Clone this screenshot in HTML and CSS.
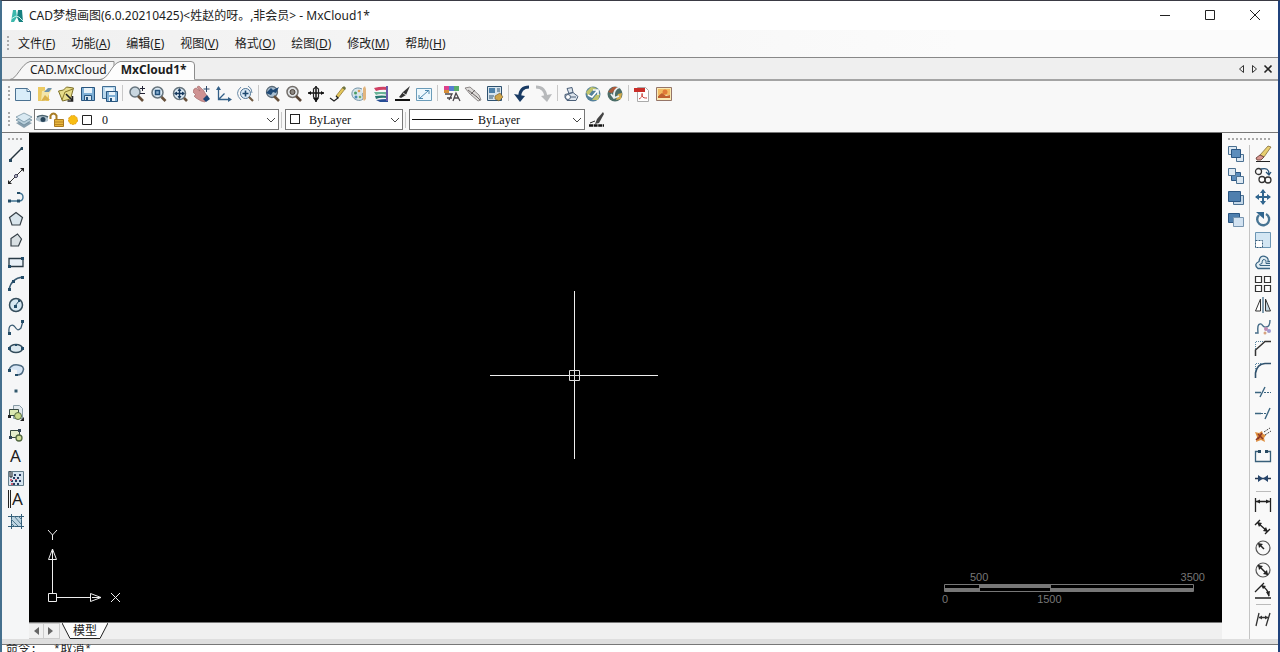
FILE: index.html
```html
<!DOCTYPE html>
<html lang="zh-CN">
<head>
<meta charset="utf-8">
<title>CAD梦想画图</title>
<link rel="stylesheet" href="styles.css">
</head>
<body>
<div class="window">
<header class="titlebar">
<svg class="logo" viewBox="0 0 14 14"><path d="M3 1h3l1 7-3 5H1z" fill="#3cb8ac"/><path d="M8 1h4l1 12H9L7 8z" fill="#15807f"/><path d="M1 10l5-3 3 1 4 4" stroke="#c8f2ea" fill="none"/></svg>
<h1 class="title">CAD梦想画图(6.0.20210425)&lt;姓赵的呀。,非会员&gt; - MxCloud1*</h1>
<div class="winbtns">
<button aria-label="最小化"><svg viewBox="0 0 12 12"><path d="M1 5.500h10" stroke="#222"/></svg></button>
<button aria-label="最大化"><svg viewBox="0 0 12 12"><path d="M1.500 .5h9v9h-9z" stroke="#222" fill="none"/></svg></button>
<button aria-label="关闭"><svg viewBox="0 0 12 12"><path d="M1 0l10 10M11 0L1 10" stroke="#222"/></svg></button>
</div>
</header>
<nav class="menubar"><span class="grip"></span>
<button>文件(<u>F</u>)</button><button>功能(<u>A</u>)</button><button>编辑(<u>E</u>)</button><button>视图(<u>V</u>)</button><button>格式(<u>O</u>)</button><button>绘图(<u>D</u>)</button><button>修改(<u>M</u>)</button><button>帮助(<u>H</u>)</button>
</nav>
<div class="doctabs">
<svg class="taboutline" viewBox="0 0 200 23"><path d="M8 21.500C15 21 19 6 28 3.500H112V21.500z" fill="#f7f7f7" stroke="#8c8c8c"/><path d="M98 22C107 21 109 6 118 3.500H189Q192.500 3.500 192.500 7V22z" fill="#fdfdfd"/><path d="M98 21.500C107 21 109 6 118 3.500H189Q192.500 3.500 192.500 7V21.500" fill="none" stroke="#8c8c8c"/></svg>
<button class="tab">CAD.MxCloud</button><button class="tab active">MxCloud1*</button>
<div class="tabctl">
<button aria-label="上一个"><svg viewBox="0 0 10 10"><path d="M6.500 1.500v7L2.500 5z" fill="none" stroke="#333"/></svg></button>
<button aria-label="下一个"><svg viewBox="0 0 10 10"><path d="M2.500 1.500v7L6.500 5z" fill="none" stroke="#333"/></svg></button>
<button aria-label="关闭文档"><svg viewBox="0 0 10 10"><path d="M1.500 1.500l7 7M8.500 1.500l-7 7" stroke="#222" stroke-width="1.600"/></svg></button>
</div>
</div>
<div class="bars">
<div class="row"><span class="grip"></span>
<div class="tools">
<button aria-label="新建"><svg viewBox="0 0 18 18"><path d="M1.500 3.500h12l3 3v9h-15z" fill="#d9edf9" stroke="#4b7292"/><path d="M13 3.500v3h3.500" fill="#fff" stroke="#4b7292"/></svg></button>
<button aria-label="打开"><svg viewBox="0 0 18 18"><path d="M2 2h7v3h4v11H2z" fill="#ecca62"/><path d="M6 6l10-2-4 7-2 5H5z" fill="#f3e6aa"/><path d="M8 7l4-4h4l-3 4z" fill="#6e93ad"/><path d="M5 16l4-6 5 5" fill="#d9b04a"/></svg></button>
<button aria-label="打开云图"><svg viewBox="0 0 18 18"><path d="M1.500 6l5-1 3-3 7 1-3 11-8 2z" fill="#e7dc8a" stroke="#7d7028"/><path d="M5 15l3-8 8-3" stroke="#8a7a2c" fill="none"/><path d="M9 9l6 6M15.500 11v5h-5" stroke="#222" stroke-width="1.600" fill="none"/></svg></button>
<button aria-label="保存"><svg viewBox="0 0 18 18"><path d="M2.500 2.500h13v13h-13z" fill="#7fb0d6" stroke="#28557e"/><path d="M5 3h8v5H5z" fill="#e8f3fa"/><path d="M5.500 10.500h7v5h-7z" fill="#d8e6ef" stroke="#28557e"/><path d="M7 12h2v3H7z" fill="#28557e"/></svg></button>
<button aria-label="另存为"><svg viewBox="0 0 18 18"><path d="M1.500 1.500h13v12h-13z" fill="#b9d7ec" stroke="#3f6d93"/><path d="M4 3h8v3H4z" fill="#eef7fc"/><path d="M5.500 6.500h11v10h-11z" fill="#7fb0d6" stroke="#28557e"/><path d="M8 7h6v3H8zM8 12h6v4H8z" fill="#e8f3fa"/><path d="M9 13h2v3H9z" fill="#28557e"/></svg></button>
<i class="sep"></i>
<button aria-label="实时缩放"><svg viewBox="0 0 18 18"><circle cx="7" cy="7" r="5" fill="#c8d6df" stroke="#66747d" stroke-width="1.500"/><path d="M10 11l5 5" stroke="#66503b" stroke-width="2.600"/><path d="M12 3.500h5M14.500 1v5M12 8.500h5" stroke="#223"/></svg></button>
<button aria-label="窗口缩放"><svg viewBox="0 0 18 18"><circle cx="7.500" cy="7.500" r="5.500" fill="#dceaf5" stroke="#66747d" stroke-width="1.500"/><path d="M5.500 5.500h4v4h-4z" fill="#8cb2d4" stroke="#22507a" stroke-width="1.500"/><path d="M11.500 12l4 4" stroke="#66503b" stroke-width="2.600"/></svg></button>
<button aria-label="全部缩放"><svg viewBox="0 0 18 18"><circle cx="8.500" cy="8.500" r="6" fill="#dceaf5" stroke="#66747d" stroke-width="1.500"/><path d="M13 13l3 3" stroke="#66503b" stroke-width="2.600"/><path d="M8.500 4v9M4 8.500h9" stroke="#173a5f" stroke-width="1.400"/><path d="M6.500 6l2-3 2 3zM6.500 11l2 3 2-3zM6 6.500l-3 2 3 2zM11 6.500l3 2-3 2z" fill="#173a5f"/></svg></button>
<button aria-label="平移"><svg viewBox="0 0 18 18"><path d="M1 4l2-1 4 3-3-4 2-1 5 5 1 2 3 4-3 5-4-1-5-3-2-2 2-1-3-3z" fill="#cf9292" stroke="#9d6060" stroke-width=".6"/><path d="M10 14l4-4 3 4-4 3z" fill="#1c4576"/><path d="M13.500 1v6M10.500 4h6" stroke="#2a4668"/></svg></button>
<button aria-label="坐标系"><svg viewBox="0 0 18 18"><path d="M3.500 2v12.500H15M3.500 14.500l6-6" fill="none" stroke="#335f87" stroke-width="1.300"/><path d="M1 5l2.500-4L6 5zM13 12l4 2.500-4 2.500z" fill="#335f87"/></svg></button>
<button aria-label="缩放上一个"><svg viewBox="0 0 18 18"><circle cx="9.500" cy="8.500" r="5" fill="#dcebf7" stroke="#4d7292"/><path d="M9.500 5.500v6M6.500 8.500h6" stroke="#1d4970" stroke-width="1.600"/><path d="M13 12l4 4" stroke="#715b42" stroke-width="2.200"/><path d="M5 2Q-2 8 5 15M12 1q4 2 4 7" fill="none" stroke="#6b8ca8"/></svg></button>
<i class="sep"></i>
<button aria-label="查看"><svg viewBox="0 0 18 18"><circle cx="8" cy="7" r="5.500" fill="#a9bfd1" stroke="#5b6a76" stroke-width="1.300"/><path d="M2 8l5-5 2 2 6-3-3 6-3-1-2 3z" fill="#204a76"/><path d="M10 11l5 5" stroke="#66503b" stroke-width="2.600"/></svg></button>
<button aria-label="查找"><svg viewBox="0 0 18 18"><circle cx="7.500" cy="7" r="5.500" fill="#e1e4e6" stroke="#74706c" stroke-width="1.500"/><circle cx="7.500" cy="7" r="2.500" fill="#8b8680" stroke="#4a4038"/><path d="M11 11l5 5" stroke="#5b4637" stroke-width="2.600"/></svg></button>
<button aria-label="三维平移"><svg viewBox="0 0 18 18"><path d="M9 1v16M1 8h16" stroke="#111" stroke-width="1.500"/><path d="M6.500 4l2.500-2 2.500 2v8l-2.500 3-2.500-3z" fill="none" stroke="#222" stroke-width="1.200"/><path d="M6 13h6l-3 4zM1 8l3-2v4zM17 8l-3-2v4z" fill="#111"/></svg></button>
<button aria-label="画笔"><svg viewBox="0 0 18 18"><path d="M7 11L14 2l2 2-7 9z" fill="#e4c75a" stroke="#876c28" stroke-width=".7"/><path d="M1 13l4 3 4-3-2-2" fill="none" stroke="#222" stroke-width="1.300"/><path d="M13 3l2-2 2 2-1 2z" fill="#6d7442"/></svg></button>
<button aria-label="调色板"><svg viewBox="0 0 18 18"><path d="M12 4C6 1 1 5 2 10s8 7 11 4c1-3-2-4 0-6" fill="#d6e5eb" stroke="#7393a6"/><circle cx="5.500" cy="8" r="1.500" fill="#4a9b64"/><circle cx="9" cy="6" r="1.300" fill="#dd9b53"/><circle cx="6" cy="12" r="1.500" fill="#4589b5"/><circle cx="10" cy="12" r="1.300" fill="#73af66"/><path d="M13 3l2-2 1 3v10l-2 2-1-2z" fill="#e2b57e"/></svg></button>
<button aria-label="图层颜色"><svg viewBox="0 0 18 18"><path d="M2 3q7-2 14-1v3Q9 4 4 6z" fill="#d04164"/><path d="M2 7q7 0 14 0v3Q8 8 4 10z" fill="#6ab497"/><path d="M3 11q7-1 13 0v2Q8 12 4 14z" fill="#25746e"/><path d="M4 15q6-1 12-1v3H8z" fill="#254d94"/><path d="M14 1h2v15h-2z" fill="#6a5aa9"/></svg></button>
<button aria-label="线宽"><svg viewBox="0 0 18 18"><path d="M1 14h15v2H1z" fill="#111"/><path d="M5 12l4-5 7-6-4 9-5 3z" fill="#333"/><path d="M9 8l3 2" stroke="#ddd"/></svg></button>
<button aria-label="全屏"><svg viewBox="0 0 18 18"><path d="M1.500 3.500h15v12h-15z" fill="#edf8fd" stroke="#6b9cb9"/><path d="M5 13l8-7M10 5.500h4V9M4 10v3.500h4" stroke="#4a87ad" fill="none"/></svg></button>
<i class="sep"></i>
<button aria-label="文字样式"><svg viewBox="0 0 18 18"><path d="M1 1h5v5H1z" fill="#db408b"/><path d="M6 1h5v5H6z" fill="#557ed1"/><path d="M11 1h5v5h-5z" fill="#59ad6a"/><path d="M1 5h5v3H1z" fill="#d48c37"/><path d="M2 9h7l-3 6M4 13h5M10 16l3-8 4 8M11 13h4" stroke="#494549" fill="none" stroke-width="1.300"/></svg></button>
<button aria-label="标注样式"><svg viewBox="0 0 18 18"><path d="M1 3l5-1 9 8 2 5-3 1-8-7z" fill="#dddbd9" stroke="#777272" stroke-width=".8"/><path d="M4 5l9 7M7 9l4-4M12 11l4 4" stroke="#6c6666"/></svg></button>
<button aria-label="属性"><svg viewBox="0 0 18 18"><path d="M1.500 1.500h14v14h-14z" fill="#d7e4ed" stroke="#2f5270"/><path d="M3 3h6v5H3z" fill="#4c80a9"/><path d="M11 4h3M11 6h3M3 11h5M3 13h4" stroke="#2f5270"/><path d="M9 11l5-3 3 4-4 4-4-2z" fill="#cfa54a" stroke="#6d552b" stroke-width=".6"/></svg></button>
<i class="sep"></i>
<button aria-label="撤销"><svg viewBox="0 0 18 18"><path d="M16 2Q7 2 6.500 12" fill="none" stroke="#193b64" stroke-width="2.800"/><path d="M1 9l11 2-5 6z" fill="#193b64"/></svg></button>
<button aria-label="重做"><svg viewBox="0 0 18 18"><path d="M1 2Q10 2 11 12" fill="none" stroke="#b7b9bb" stroke-width="2.800"/><path d="M6 11l11-2-5 8z" fill="#b7b9bb"/></svg></button>
<i class="sep"></i>
<button aria-label="打印"><svg viewBox="0 0 18 18"><path d="M5 3.500l5-1 1 5-4 1zM3 9.500l8-2 5 4-2 4H5l-2-3z" fill="#dde5ed" stroke="#4c6079"/><circle cx="6" cy="12" r="2.500" fill="#fff" stroke="#4c6079"/><path d="M9 12h5" stroke="#4c6079"/></svg></button>
<button aria-label="云端上传"><svg viewBox="0 0 18 18"><circle cx="9" cy="9" r="7.500" fill="#55819a"/><path d="M2 7l5-5 6 1-5 3-4 5zM8 15l4-5 4-1-2 6z" fill="#c0c46c"/><path d="M4 10l4 2 5-6M9 5h5v5" stroke="#fff" stroke-width="1.600" fill="none"/></svg></button>
<button aria-label="云端下载"><svg viewBox="0 0 18 18"><circle cx="9" cy="9" r="7.500" fill="#4b6d68"/><path d="M2 7l5-5 5 0-6 6z" fill="#ad593a"/><path d="M10 15l2-6 4-1-1 6z" fill="#d6ac4c"/><path d="M14 2Q7 4 8 12M5 9l3 4 5-2" stroke="#e9eef1" stroke-width="1.800" fill="none"/></svg></button>
<i class="sep"></i>
<button aria-label="导出 PDF"><svg viewBox="0 0 18 18"><path d="M4.500 2.500h8l3 3v11h-11z" fill="#fff" stroke="#aaa"/><path d="M1 3h11v4H1z" fill="#c92e29"/><path d="M6 14c6-3 2-9 3-3 1 2 3 2 5 2" fill="none" stroke="#cb3f37"/></svg></button>
<button aria-label="导出图片"><svg viewBox="0 0 18 18"><path d="M1.500 2.500h15v13h-15z" fill="#f9e9b4" stroke="#957568"/><path d="M3 4h12v6H3z" fill="#f2bb62"/><circle cx="10" cy="7" r="2.500" fill="#e07a37"/><path d="M3 11l4-3 4 3 4-1v3H3z" fill="#c0602f"/></svg></button>
</div></div>
<div class="row props"><span class="grip"></span>
<button class="layerbtn" aria-label="图层管理"><svg viewBox="0 0 18 18"><path d="M1 12l8 5 8-5-8-3z" fill="#879fae"/><path d="M1 9l8 5 8-5-8-3z" fill="#b9cfdb" stroke="#58788b" stroke-width=".6"/><path d="M1 6l8 5 8-5-8-4z" fill="#d9e9f2" stroke="#58788b" stroke-width=".6"/></svg></button>
<div class="combo layer"><select aria-label="图层"><option>0</option></select>
<svg class="layericons" viewBox="0 0 58 16"><path d="M1 6q6-4 12-1v4q-6 3-12-1z" fill="#b3c4cf"/><circle cx="8" cy="7.500" r="2.500" fill="#29465b"/><path d="M2 5q5-3 11 0" fill="none" stroke="#4c6571" stroke-width="1.500"/><path d="M15.500 7V3.500q3-4 6 0V8" fill="none" stroke="#a97d25" stroke-width="2"/><path d="M19.500 7.500h9v7h-9z" fill="#e7b63e" stroke="#ab7a1f"/><path d="M20 10h8M20 12.500h8" stroke="#b88425"/><circle cx="38" cy="8" r="4.500" fill="#f8bd13" stroke="#e09c19" stroke-dasharray="2 1"/><path d="M47.500 3.500h9v9h-9z" fill="#fff" stroke="#222"/></svg>
<svg class="chev" viewBox="0 0 10 6"><path d="M1 1l4 4 4-4" fill="none" stroke="#444"/></svg></div>
<i class="sep"></i>
<div class="combo color"><select aria-label="颜色"><option>ByLayer</option></select><i class="swatch"></i><svg class="chev" viewBox="0 0 10 6"><path d="M1 1l4 4 4-4" fill="none" stroke="#444"/></svg></div>
<i class="sep"></i>
<div class="combo ltype"><select aria-label="线型"><option>ByLayer</option></select><i class="stroke"></i><svg class="chev" viewBox="0 0 10 6"><path d="M1 1l4 4 4-4" fill="none" stroke="#444"/></svg></div>
<button class="lw" aria-label="线宽设置"><svg viewBox="0 0 18 18"><path d="M1 14.500h15" stroke="#111" stroke-width="2.500" stroke-dasharray="4 .6"/><path d="M7 13l2-5 6-7 1 2-5 9z" fill="#444"/><path d="M2 12l5-2" stroke="#222"/></svg></button>
</div>
</div>
<main class="work">
<aside class="side left"><span class="hgrip"></span><div class="stack">
<button aria-label="直线"><svg viewBox="0 0 18 18"><path d="M3 15L15 3" stroke="#24323d" stroke-width="1.400"/><path d="M2 14h3v3H2zM14 2h2v3h-3z" fill="#27485e"/></svg></button>
<button aria-label="构造线"><svg viewBox="0 0 18 18"><path d="M2 16L16 2" stroke="#333"/><path d="M1 13v4h4zM13 1h4v4z" fill="#222"/><circle cx="9" cy="9" r="1.500" fill="#ddd" stroke="#335"/></svg></button>
<button aria-label="多段线"><svg viewBox="0 0 18 18"><path d="M2 13h10q4 0 4-4t-5-4" fill="none" stroke="#417493" stroke-width="1.400"/><path d="M1 11.500h3v3H1zM10 11.500h3v3h-3zM10 4h3v2h-3z" fill="#234c68"/></svg></button>
<button aria-label="多边形"><svg viewBox="0 0 18 18"><path d="M9 2.500l6.500 5-2.500 7.500H5L2.500 7.500z" fill="#d9e5ec" stroke="#353f46" stroke-width="1.200"/></svg></button>
<button aria-label="不规则多边形"><svg viewBox="0 0 18 18"><path d="M4 7.500L10.500 3l4 5-3 7H4z" fill="#d9e0e3" stroke="#353f46" stroke-width="1.200"/></svg></button>
<button aria-label="矩形"><svg viewBox="0 0 18 18"><path d="M2 5.500h14v8H2z" fill="#e8f0f7" stroke="#293a46" stroke-width="1.300"/><path d="M1 12h3v3H1zM14 4h3v3h-3z" fill="#234c68"/></svg></button>
<button aria-label="圆弧"><svg viewBox="0 0 18 18"><path d="M2 16Q4 4 16 3" fill="none" stroke="#385a72" stroke-width="1.300"/><path d="M1 14h3v3H1zM5 6h3v3H5zM14 2h3v3h-3z" fill="#234c68"/></svg></button>
<button aria-label="圆"><svg viewBox="0 0 18 18"><circle cx="9" cy="9" r="6.500" fill="#d6e7f1" stroke="#334c5b" stroke-width="1.500"/><path d="M8 10l4-5" stroke="#234c68"/><path d="M7 9h3v3H7zM11 4h2v2h-2z" fill="#234c68"/></svg></button>
<button aria-label="样条曲线"><svg viewBox="0 0 18 18"><path d="M2 15C1 6 6 6 8 9s3 4 6 1l2-7" fill="none" stroke="#385a72" stroke-width="1.300"/><path d="M1 14h3v3H1zM14 2h3v3h-3z" fill="#234c68"/></svg></button>
<button aria-label="椭圆"><svg viewBox="0 0 18 18"><ellipse cx="9" cy="9.500" rx="6.500" ry="4" fill="#dbe8ef" stroke="#334c5b" stroke-width="1.500"/><path d="M1 8h3v3H1zM14 8h3v3h-3zM8 5h2v2H8z" fill="#234c68"/></svg></button>
<button aria-label="椭圆弧"><svg viewBox="0 0 18 18"><path d="M2 8q6-8 13-1 2 6-5 7V9z" fill="#d6e5f4"/><path d="M2 9q2-6 9-5t5 6q-1 4-6 4" fill="none" stroke="#4d6a81" stroke-width="1.500"/><path d="M1 8h3v3H1zM8 13h3v2H8z" fill="#234c68"/></svg></button>
<button aria-label="点"><svg viewBox="0 0 18 18"><path d="M7.500 7.500h3v3h-3z" fill="#31586c"/></svg></button>
<button aria-label="插入块"><svg viewBox="0 0 18 18"><path d="M6.500 1.500h6l3 3v10h-9z" fill="#e2e9ed" stroke="#879ba6"/><path d="M2.500 5.500h9v6h-9z" fill="#dce9b4" stroke="#354841"/><circle cx="11" cy="12" r="3.500" fill="#c9d98b" stroke="#526840"/><path d="M1 11h3v3H1zM17 13v4h-4z" fill="#222"/></svg></button>
<button aria-label="创建块"><svg viewBox="0 0 18 18"><path d="M3.500 4.500h9v7h-9z" fill="#e4edcc" stroke="#354841"/><circle cx="12" cy="12" r="3" fill="#d3df9a" stroke="#526840" stroke-width="1.300"/><path d="M2 10h3v3H2zM11 3h3v3h-3z" fill="#345"/></svg></button>
<button class="glyph">A</button>
<button aria-label="图案填充"><svg viewBox="0 0 18 18"><path d="M1.500 2.500h15v14h-15z" fill="#d5e4ef" stroke="#637d8b"/><path d="M7 6h2M12 6h2M6 9h2M10 9h2M4 12h2M8 12h2M12 12h2M6 15h2M10 15h2" stroke="#283c61" stroke-width="2"/><path d="M3 10h2v2H3zM4 14h2v2H4zM8 10h2v1H8z" fill="#cf5f74"/><path d="M3 2v6h2V3" fill="none" stroke="#222"/></svg></button>
<button class="glyph multi">A</button>
<button aria-label="边界"><svg viewBox="0 0 18 18"><path d="M4 4h10v11H4z" fill="#bdd4e1"/><path d="M1 4.500h16M1 14.500h16M4.500 2v15M14.500 2v15" stroke="#345e78"/><path d="M4 7l7 7M4 11l4 4M7 4l7 8M11 4l4 4" stroke="#537a90"/></svg></button>
</div></aside>
<section class="center">
<div class="canvas">
<svg class="cross" viewBox="0 0 168 168"><path d="M0 84.500h79M89 84.500h79M84.500 0v79M84.500 89v79" stroke="#eee"/><path d="M79.500 79.500h10v10h-10zM79 84.500h11M84.500 79v11" fill="none" stroke="#ddd"/></svg>
<svg class="ucs" viewBox="0 0 80 80"><path d="M4.500 67.500h8v8h-8zM8.500 67V34M13 71.500h34M8.500 23L4.500 33.500h8zM8.500 23v11M57 71.500L46.500 67.500v8zM48 71.500h9M4 4l4.500 5L13 4M8.500 9v5M67 67l9 9M76 67l-9 9" fill="none" stroke="#eee"/></svg>
<div class="scale"><div class="up"><span>500</span><span>3500</span></div><svg viewBox="0 0 250 10"><path d="M.5 1.500h249v7H.5z" fill="#000" stroke="#777"/><path d="M1 5h34v3H1zM35 1h71v4H35zM106 5h143v3H106z" fill="#777"/><path d="M35.500 1v8M106.500 1v8" stroke="#777"/></svg><div class="down"><span>0</span><span>1500</span></div></div>
</div>
<div class="models"><button class="arr" aria-label="向左"><svg viewBox="0 0 10 10"><path d="M8 1v8L3 5z" fill="#666"/></svg></button><button class="arr" aria-label="向右"><svg viewBox="0 0 10 10"><path d="M2 1v8l5-4z" fill="#666"/></svg></button>
<button class="model"><svg viewBox="0 0 46 17"><path d="M0 0l8 15.500h30L46 0" fill="#fdfdfd" stroke="#222"/></svg><span>模型</span></button></div>
</section>
<div class="rightbars">
<span class="hgrip"></span>
<aside class="side order"><div class="stack">
<button aria-label="前置"><svg viewBox="0 0 18 18"><path d="M1.500 1.500h8v8h-8zM9.500 9.500h7v7h-7z" fill="#dce8f2" stroke="#4b7091"/><path d="M4.500 4.500h9v8h-9z" fill="#5c8dbc" stroke="#2a5683"/></svg></button>
<button aria-label="后置"><svg viewBox="0 0 18 18"><path d="M4.500 5.500h9v8h-9z" fill="#5c8dbc" stroke="#2a5683"/><path d="M1.500 1.500h7v7h-7zM9.500 9.500h7v7h-7z" fill="#dce8f2" stroke="#4b7091"/></svg></button>
<button aria-label="置于对象之上"><svg viewBox="0 0 18 18"><path d="M6.500 6.500h10v9h-10z" fill="#c2d6e7" stroke="#4b7091"/><path d="M1.500 2.500h12v10h-12z" fill="#4f7fae" stroke="#2a5683"/></svg></button>
<button aria-label="置于对象之下"><svg viewBox="0 0 18 18"><path d="M1.500 2.500h11v9h-11z" fill="#4f7fae" stroke="#2a5683"/><path d="M6.500 6.500h10v9h-10z" fill="#d2e2f1" stroke="#7794af"/></svg></button>
</div></aside>
<aside class="side modify"><div class="stack">
<button aria-label="删除"><svg viewBox="0 0 18 18"><path d="M6 10l8-9 3 1-7 10z" fill="#e8cf70" stroke="#725a28" stroke-width=".7"/><path d="M2 13l4-3 4 2-3 3H3z" fill="#d99790" stroke="#764b45"/><path d="M2 16.500h14" stroke="#222"/></svg></button>
<button aria-label="复制"><svg viewBox="0 0 18 18"><circle cx="4.500" cy="4.500" r="3" fill="none" stroke="#333" stroke-width="1.300"/><circle cx="8" cy="12.500" r="3" fill="#fff" stroke="#333" stroke-width="1.300"/><circle cx="14" cy="13" r="3" fill="none" stroke="#333" stroke-width="1.300"/><path d="M7 2q8-2 8 5M12 5l3 3 2-3" fill="none" stroke="#285377" stroke-width="1.300"/></svg></button>
<button aria-label="移动"><svg viewBox="0 0 18 18"><path d="M9 2v14M2 9h14" stroke="#31668f" stroke-width="2"/><path d="M6 5l3-4 3 4zM6 13l3 4 3-4zM5 6L1 9l4 3zM13 6l4 3-4 3z" fill="#31668f"/></svg></button>
<button aria-label="旋转"><svg viewBox="0 0 18 18"><path d="M5 5a6 6 0 1 0 7-1" fill="none" stroke="#487594" stroke-width="2.400"/><path d="M2 2h8v7z" fill="#31668f"/></svg></button>
<button aria-label="缩放"><svg viewBox="0 0 18 18"><path d="M1.500 1.500h15v15h-15z" fill="#d3e6f3" stroke="#6c96b4"/><path d="M1.500 9.500h7v7h-7z" fill="#fff" stroke="#395e7c" stroke-dasharray="2 1"/></svg></button>
<button aria-label="偏移"><svg viewBox="0 0 18 18"><path d="M16 15.500H4q-5-4 1-7 1-8 8-4 2 2 1 4h2" fill="#e1edf3" stroke="#386484" stroke-width="1.300"/><path d="M16 12.500H6q-2-1 2-2 0-6 4-3v3h4" fill="none" stroke="#386484"/></svg></button>
<button aria-label="阵列"><svg viewBox="0 0 18 18"><path d="M1.500 1.500h6v6h-6zM10.500 1.500h6v6h-6zM1.500 10.500h6v6h-6zM10.500 10.500h6v6h-6z" fill="#fff" stroke="#333" stroke-width="1.200"/></svg></button>
<button aria-label="镜像"><svg viewBox="0 0 18 18"><path d="M6.500 3v12h-5z" fill="#fff" stroke="#333"/><path d="M11.500 3v12h5z" fill="#c5d7e2" stroke="#333"/><path d="M9 1v16" stroke="#426b87" stroke-width="1.300"/></svg></button>
<button aria-label="编辑样条"><svg viewBox="0 0 18 18"><path d="M1 15h3Q3 6 6 6c3-1 2 4 6 3q4 0 4-7" fill="none" stroke="#456c88" stroke-width="1.400"/><circle cx="12" cy="11" r="2" fill="#be8ab2"/><circle cx="15" cy="13" r="2" fill="#9e9ad0"/><circle cx="11" cy="15" r="1.500" fill="#d7a47f"/></svg></button>
<button aria-label="倒角"><svg viewBox="0 0 18 18"><path d="M1.500 17V11L11 2.500h6" fill="none" stroke="#333" stroke-width="1.500"/><path d="M1.500 10V2.500H10" fill="none" stroke="#5b87a2" stroke-dasharray="1 1"/></svg></button>
<button aria-label="圆角"><svg viewBox="0 0 18 18"><path d="M1.500 17V12Q3 3 11 2.500h6" fill="none" stroke="#31516c" stroke-width="1.600"/><path d="M1.500 10V2.500H10" fill="none" stroke="#5b87a2" stroke-dasharray="1 1"/></svg></button>
<button aria-label="修剪"><svg viewBox="0 0 18 18"><path d="M1 9.500h6M6 14l5-10" fill="none" stroke="#3b6580" stroke-width="1.400"/><path d="M10 9.500h7" stroke="#3b6580" stroke-dasharray="2 1"/></svg></button>
<button aria-label="延伸"><svg viewBox="0 0 18 18"><path d="M1 9.500h6M11 15l5-11" stroke="#3b6580" stroke-width="1.400"/><path d="M7 9.500h6" stroke="#3b6580" stroke-dasharray="2 1"/></svg></button>
<button aria-label="分解"><svg viewBox="0 0 18 18"><path d="M1 6l4 1 3-2 1 3 3 1-2 3 1 4-4-2-5 2 1-5z" fill="#df9040"/><path d="M4 8l5 5M8 7l-4 6M2 14l3-3" stroke="#8d3726" stroke-width="1.500"/><path d="M10 6l6-4M11 9l6-4" stroke="#444" stroke-dasharray="2 1"/></svg></button>
<button aria-label="打断"><svg viewBox="0 0 18 18"><path d="M6 4.500H1.500v10h15v-10H12" fill="none" stroke="#385f7a" stroke-width="1.300"/><path d="M4 3h3v3H4zM11 3h3v3h-3z" fill="#294a62"/></svg></button>
<button aria-label="合并"><svg viewBox="0 0 18 18"><path d="M1 9.500h16" stroke="#26364e" stroke-width="1.500"/><path d="M4 6l5 3.500-5 3.500zM14 6L9 9.500l5 3.500z" fill="#26456b"/></svg></button>
<i class="hsep"></i>
<button aria-label="线性标注"><svg viewBox="0 0 18 18"><path d="M1.500 2v14M16.500 2v14M2 5.500h14" stroke="#222" stroke-width="1.300"/><path d="M2 5.500l4-2v4zM16 5.500l-4-2v4z" fill="#222"/></svg></button>
<button aria-label="对齐标注"><svg viewBox="0 0 18 18"><path d="M1 7l5-5M11 16l5-5M4 5l9 8" stroke="#222" stroke-width="1.400"/><path d="M3 4l5 1-3 4zM14 14l-5-1 3-4z" fill="#222"/></svg></button>
<button aria-label="半径标注"><svg viewBox="0 0 18 18"><circle cx="9" cy="9" r="7" fill="none" stroke="#555" stroke-width="1.200"/><path d="M5 5l5 5" stroke="#222" stroke-width="1.500"/><path d="M4 4l5 1-4 4z" fill="#222"/></svg></button>
<button aria-label="直径标注"><svg viewBox="0 0 18 18"><circle cx="9" cy="9" r="7" fill="none" stroke="#555" stroke-width="1.200"/><path d="M4 4l10 10" stroke="#222" stroke-width="1.500"/><path d="M4 4l5 1-4 4zM14 14l-5-1 4-4z" fill="#222"/></svg></button>
<button aria-label="角度标注"><svg viewBox="0 0 18 18"><path d="M1 16h16M1 10l9-9M8 4q6 3 7 10" fill="none" stroke="#222" stroke-width="1.300"/><path d="M7 3l5 1-3 3zM12 10l4-1-1 6z" fill="#222"/></svg></button>
<i class="hsep"></i>
<button aria-label="编辑标注"><svg viewBox="0 0 18 18"><path d="M2 16L5 3M12 16l4-13M5 7.500h9" stroke="#333" stroke-width="1.300"/><path d="M5 7.500l3-2v4zM14 7.500l-3-2v4z" fill="#333"/></svg></button>
</div></aside>
</div>
</main>
<footer class="command"><span>命令:</span><span>*取消*</span></footer>
</div>
</body>
</html>
```
FILE: styles.css
```css
* { box-sizing: border-box; }
body {
  margin: 0;
  color: #1c1c1c;
  font: 12px/16px "Noto Sans", "Noto Sans CJK SC", sans-serif;
}
button {
  padding: 0;
  border: 0;
  background: none;
  color: inherit;
  font: inherit;
  white-space: nowrap;
}
svg { display: block; }
.window {
  display: flex;
  flex-direction: column;
  height: 100vh;
  overflow: hidden;
  border-top: 1px solid #3a3a44;
  border-left: 2px solid #45708e;
  border-right: 2px solid #20427c;
  background: #f8f8f8;
}
.titlebar {
  display: flex;
  flex: none;
  align-items: center;
  height: 29px;
  padding: 0 17px 0 8px;
  background: #fff;
}
.logo { width: 14px; height: 14px; margin-right: 5px; }
.title { flex: 1; margin: 0; font-size: 12px; font-weight: 400; }
.winbtns { display: flex; gap: 33px; }
.winbtns svg { width: 12px; height: 12px; }
.menubar {
  display: flex;
  flex: none;
  align-items: center;
  gap: 16px;
  height: 28px;
  padding-left: 5px;
  border-bottom: 1px solid #888;
  background: linear-gradient(90deg, #f0f0f0, #fbfbfb 75%);
}
.grip {
  flex: none;
  width: 2px;
  height: 16px;
  background: repeating-linear-gradient(#aaa 0 2px, transparent 2px 4px);
}
.menubar .grip { margin-right: -7px; }
.doctabs {
  position: relative;
  display: flex;
  flex: none;
  align-items: center;
  height: 23px;
  padding: 3px 5px 0 28px;
  border-bottom: 2px solid #a4a4a4;
  background: #efefef;
}
.taboutline { position: absolute; left: 0; top: 0; width: 200px; height: 23px; }
.tab { position: relative; margin-right: 14px; }
.active { font-weight: 700; }
.tabctl { display: flex; gap: 3px; margin-left: auto; padding-bottom: 3px; }
.tabctl svg { width: 10px; height: 10px; }
.bars { flex: none; padding-bottom: 1px; border-bottom: 1px solid #777; }
.row { display: flex; align-items: center; height: 26px; padding-left: 6px; }
.tools {
  display: flex;
  flex: 1;
  justify-content: space-between;
  max-width: 659px;
  margin-left: 4px;
}
.tools svg, .stack svg, .layerbtn svg, .lw svg { width: 18px; height: 18px; }
.sep { flex: none; width: 2px; height: 16px; border-left: 1px solid #c8c8c8; }
.props { height: 25px; margin-bottom: -1px; }
.layerbtn { margin: 0 1px 0 5px; }
.combo { position: relative; height: 21px; }
.combo select {
  width: 100%;
  height: 100%;
  padding: 0 20px 0 23px;
  border: 1px solid #777;
  border-radius: 0;
  background: #fff;
  color: #111;
  font: 12px/16px "Liberation Serif", serif;
  appearance: none;
}
.layer { width: 245px; }
.layer select { padding-left: 67px; }
.color { width: 118px; }
.ltype { width: 176px; }
.ltype select { padding-left: 68px; }
.props .sep { margin: 0 2px; }
.layericons { position: absolute; left: 1px; top: 3px; width: 58px; height: 16px; }
.chev { position: absolute; right: 3px; top: 8px; width: 10px; height: 6px; }
.swatch { position: absolute; left: 5px; top: 5px; width: 10px; height: 10px; border: 1px solid #222; }
.stroke { position: absolute; left: 3px; top: 10px; width: 61px; height: 1px; background: #111; }
.lw { margin-left: 3px; }
.work { display: flex; flex: 1; min-height: 0; }
.side { display: flex; flex-direction: column; flex: none; background: #f9f9f9; }
.hgrip {
  flex: none;
  height: 2px;
  margin: 5px 6px;
  background: repeating-linear-gradient(90deg, #aaa 0 2px, transparent 2px 4px);
}
.stack {
  display: flex;
  flex: 1;
  flex-direction: column;
  align-items: center;
  justify-content: space-between;
}
.left { width: 27px; padding-bottom: 109px; background: #f5f6f7; }
.rightbars {
  display: grid;
  flex: none;
  grid-template-columns: 28px 28px;
  grid-template-rows: auto 1fr;
  background: #f9f9f9;
}
.rightbars .hgrip { grid-column: 1 / 3; }
.order { border-right: 1px solid #c4c4c4; }
.order .stack { justify-content: flex-start; gap: 4px; }
.modify { padding: 0 2px 11px 0; }
.glyph { height: 18px; font: 17px/18px "Noto Sans", sans-serif; }
.multi { padding-left: 1px; border-left: 3px double #222; }
.hsep { width: 15px; height: 2px; border-top: 1px solid #bbb; }
.center { display: flex; flex: 1; flex-direction: column; min-width: 0; }
.canvas { position: relative; flex: 1; background: #000; }
.cross { position: absolute; left: 461px; top: 158px; width: 168px; height: 168px; }
.ucs { position: absolute; left: 15px; bottom: 16px; width: 80px; height: 80px; }
.scale {
  position: absolute;
  right: 16px;
  bottom: 17px;
  width: 264px;
  color: #777;
  font: 11px/12px "Liberation Sans", sans-serif;
}
.scale svg { width: 250px; height: 10px; margin-left: 2px; }
.up { display: flex; justify-content: space-between; padding: 0 1px 0 28px; }
.down { display: flex; gap: 89px; }
.models {
  display: flex;
  flex: none;
  height: 17px;
  border-top: 1px solid #777;
  background: #f0f0f0;
}
.arr { padding: 0 2px; border: 1px solid #ccc; border-left: 0; }
.arr + .arr { padding: 0 3px 0 2px; }
.arr svg { width: 10px; height: 10px; }
.model { position: relative; width: 46px; margin-left: 2px; }
.model svg { position: absolute; left: 0; top: 0; width: 46px; height: 17px; }
.model span { position: relative; }
.command {
  display: flex;
  flex: none;
  gap: 16px;
  height: 13px;
  overflow: hidden;
  padding-left: 4px;
  border-top: 5px solid #dedede;
  background: #fff;
  box-shadow: inset 0 1px #777;
  font: 12px/13px "Liberation Mono", "Noto Sans CJK SC", monospace;
}
```
